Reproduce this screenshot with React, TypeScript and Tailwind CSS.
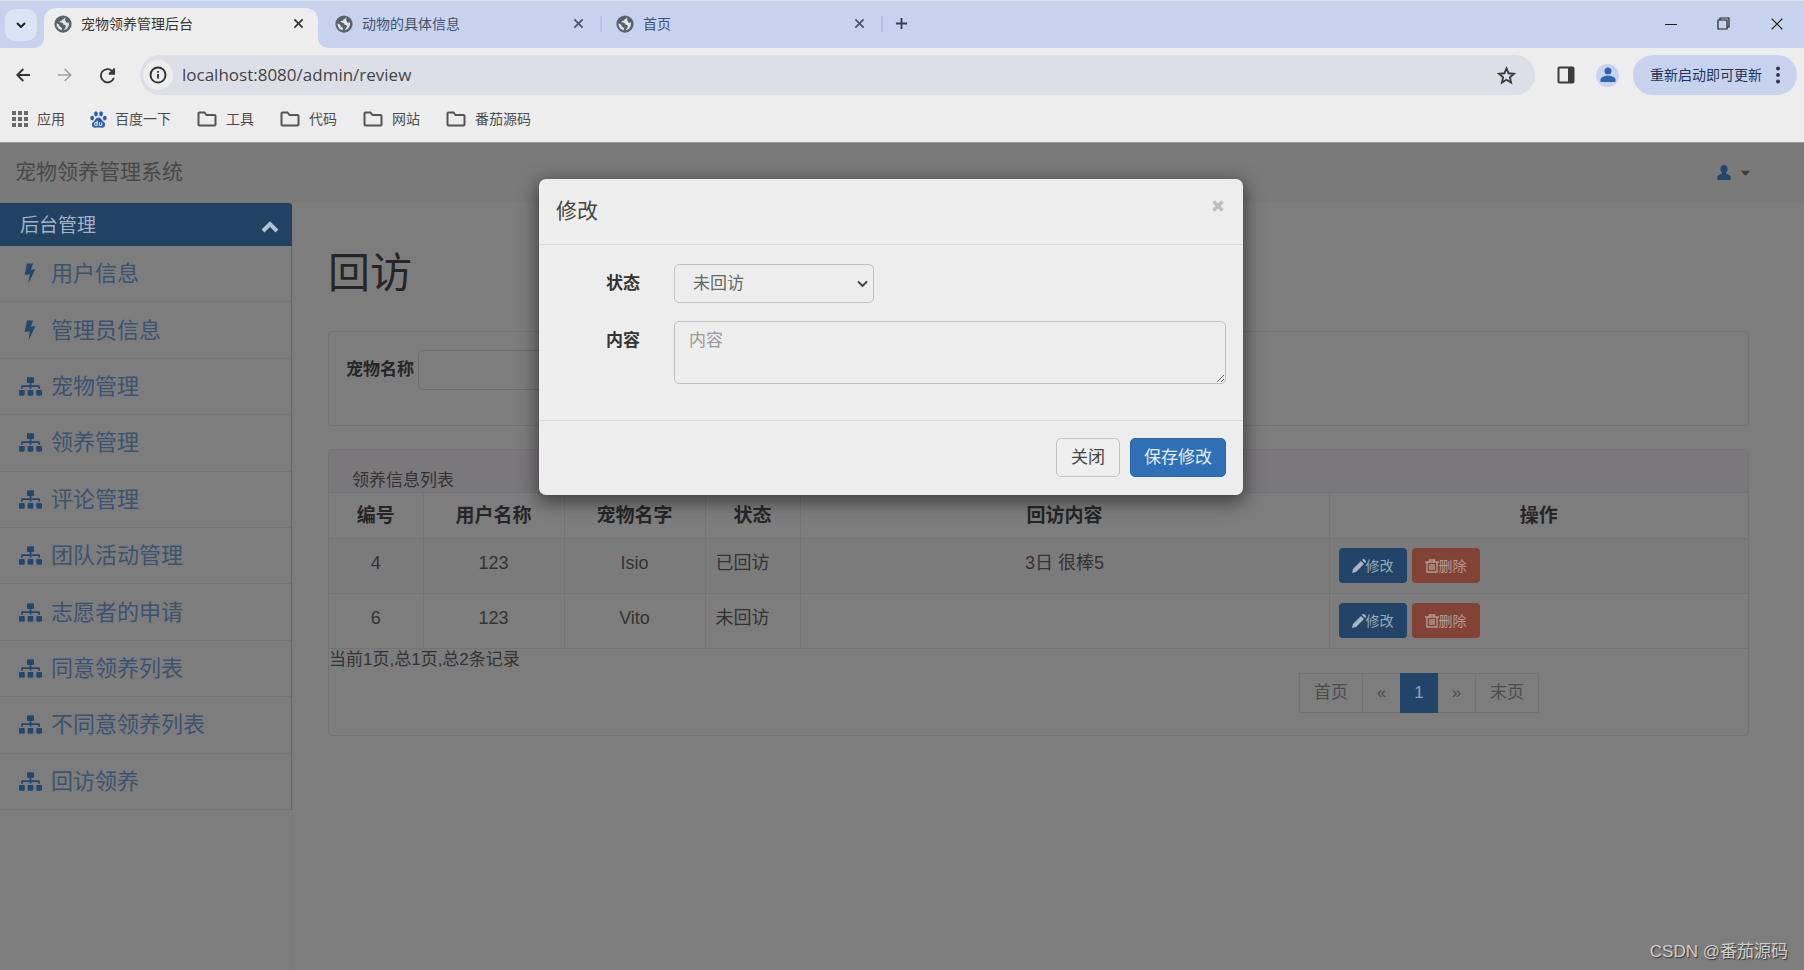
import React from "react";
import { FaSitemap, FaCaretDown } from "react-icons/fa";

const tabs = [
  { title: "宠物领养管理后台", active: true },
  { title: "动物的具体信息", active: false },
  { title: "首页", active: false },
];

const folders = ["工具", "代码", "网站", "番茄源码"];

const menu = [
  { label: "用户信息", icon: "bolt" },
  { label: "管理员信息", icon: "bolt" },
  { label: "宠物管理", icon: "tree" },
  { label: "领养管理", icon: "tree" },
  { label: "评论管理", icon: "tree" },
  { label: "团队活动管理", icon: "tree" },
  { label: "志愿者的申请", icon: "tree" },
  { label: "同意领养列表", icon: "tree" },
  { label: "不同意领养列表", icon: "tree" },
  { label: "回访领养", icon: "tree" },
];

const rows = [
  { id: "4", user: "123", pet: "Isio", status: "已回访", content: "3日 很棒5" },
  { id: "6", user: "123", pet: "Vito", status: "未回访", content: "" },
];

function Globe() {
  return (
    <svg viewBox="0 0 24 24" className="size-[18px] shrink-0" aria-hidden="true">
      <circle cx="12" cy="12" r="11.5" fill="#59616b" />
      <path
        d="M14.5 3.2c-.3 1.6-1.500 2-2.800 2.300-.8.2-.6 1.500-1.500 2-1 .5-2.600.2-2.700 1.600-.1 1.300 1.500 1 2.700 1.100 1.500.1 2 .8 2.100 1.900.1 1 .9 1.200 2 1.200 1.300.1 1.700.9 1.500 2-.2 1.200-1 1.500-1.400 2.600-.2.8-.9 1.700-1.900 2.600 4.300-.7 7.500-4.200 7.500-8.500 0-.8-.1-1.500-.3-2.200-.9.500-2 .7-2.900.200-1-.6-.7-1.800-1.500-2.400-.9-.7-.5-2.300.3-3.900zM3.500 11c-.5 4.600 2.500 8.400 6.800 9.400-.2-1.200.3-1.900.2-2.900-.1-1.200-1.600-1.100-2.500-1.900-.9-.8-.5-2-1.500-2.900-.8-.8-2.100-.9-3-1.700z"
        fill="#dfe3ec"
      />
    </svg>
  );
}

function Cross({ className }: { className: string }) {
  return (
    <svg viewBox="0 0 12 12" className={className} fill="none" stroke="currentColor" aria-hidden="true">
      <path d="M1.500 1.500l9 9M10.500 1.500l-9 9" />
    </svg>
  );
}

function Folder() {
  return (
    <svg viewBox="0 0 20 16" className="h-4 w-5" fill="none" stroke="#555" strokeWidth="2" aria-hidden="true">
      <path d="M1.500 2.500a1 1 0 0 1 1-1h5l2 2.500h8a1 1 0 0 1 1 1v8.500a1 1 0 0 1-1 1h-15a1 1 0 0 1-1-1z" />
    </svg>
  );
}

function Paw() {
  return (
    <svg viewBox="0 0 18 18" className="size-[17px]" aria-hidden="true">
      <g fill="#2b5fb3">
        <ellipse cx="2.300" cy="7.500" rx="2" ry="2.600" />
        <ellipse cx="6.300" cy="3" rx="2" ry="2.700" />
        <ellipse cx="11.700" cy="3" rx="2" ry="2.700" />
        <ellipse cx="15.700" cy="7.500" rx="2" ry="2.600" />
        <path d="M9 7c2.200 0 3 1.900 4.300 3.200 1.400 1.300 3 2.300 2.700 4.600-.3 2.100-1.700 3-3.400 2.900-1.200-.1-2.200-.3-3.600-.3s-2.400.2-3.600.3c-1.700.1-3.100-.8-3.400-2.900-.3-2.300 1.300-3.300 2.700-4.600C6 8.900 6.800 7 9 7z" />
      </g>
      <path
        d="M7.600 10.200v5.400M7.600 13a1.500 1.500 0 1 0 0 1.500M10 11.900v2.300q0 1.200 1.200 1.200h1.200v-3.500"
        fill="none"
        stroke="#e6ebf5"
        strokeWidth="1.100"
      />
    </svg>
  );
}

function Bolt() {
  return (
    <svg viewBox="0 0 12 22" className="h-[21px] w-3" fill="currentColor" aria-hidden="true">
      <path d="M2.800 0.500h6.400L7 7l4.700-.6L4.300 21.500 5.800 11.800.5 12.600z" />
    </svg>
  );
}

function UserGlyph() {
  return (
    <svg viewBox="0 0 14 15" className="h-[15px] w-[14px]" fill="currentColor" aria-hidden="true">
      <path d="M7 0c2.200 0 3.600 1.600 3.600 3.800 0 1.600-.6 2.900-1.600 3.800v1l3.600 1.700q1.100.5 1.100 1.700V15H.3v-3q0-1.200 1.100-1.700L5 8.600v-1C4 6.700 3.400 5.400 3.400 3.800 3.400 1.600 4.800 0 7 0z" />
    </svg>
  );
}

function TabStrip() {
  return (
    <div className="flex h-12 items-end border-t border-[#dbe8f2] bg-[#c7d3ee]">
      <div className="flex h-full w-11 items-center justify-center pr-[2px]">
        <button aria-label="搜索标签页" className="flex size-8 items-center justify-center rounded-[10px] bg-[#d9e4f4]">
          <svg viewBox="0 0 10 6" className="w-[10px]" fill="none" stroke="#222" strokeWidth="2" aria-hidden="true">
            <path d="M1 1l4 4 4-4" />
          </svg>
        </button>
      </div>
      {tabs.map((t) => (
        <div
          key={t.title}
          className={
            t.active
              ? "relative flex h-10 w-[274px] items-center rounded-t-[12px] bg-[#ededed] pb-[9px] pl-[10px] pr-[10px] text-[#333]"
              : "relative flex h-10 w-[281px] items-center pb-[9px] pl-[17px] pr-[11px] text-[#45506a]"
          }
        >
          {t.active && (
            <>
              <svg viewBox="0 0 10 10" className="absolute -left-[10px] bottom-0 size-[10px]" fill="#ededed" aria-hidden="true">
                <path d="M10 0v10H0A10 10 0 0 0 10 0z" />
              </svg>
              <svg viewBox="0 0 10 10" className="absolute -right-[10px] bottom-0 size-[10px]" fill="#ededed" aria-hidden="true">
                <path d="M0 0v10h10A10 10 0 0 1 0 0z" />
              </svg>
            </>
          )}
          <Globe />
          <span className="ml-[9px] flex-1 text-sm">{t.title}</span>
          <button aria-label="关闭标签页" className="p-1">
            <Cross className="size-[11px] stroke-[1.800]" />
          </button>
          {!t.active && <span className="absolute -right-[3px] top-2 h-4 w-0.5 bg-[#b3c2e2]" />}
        </div>
      ))}
      <button aria-label="新标签页" className="ml-[15px] flex h-full items-center pb-[2px] text-[#333f5c]">
        <svg viewBox="0 0 14 14" className="size-[13px]" stroke="currentColor" strokeWidth="2" aria-hidden="true">
          <path d="M7 1v12M1 7h12" />
        </svg>
      </button>
      <div className="ml-auto flex h-full items-center gap-[40px] pb-[2px] pr-[20px] text-[#222]">
        <button aria-label="最小化">
          <svg viewBox="0 0 12 12" className="size-3" stroke="currentColor" aria-hidden="true">
            <path d="M0 6.500h12" />
          </svg>
        </button>
        <button aria-label="还原">
          <svg viewBox="0 0 13 13" className="size-[13px]" fill="none" stroke="currentColor" strokeWidth="1.200" aria-hidden="true">
            <path d="M1 3h9v9H1zM3 3V1h9v9h-2" />
          </svg>
        </button>
        <button aria-label="关闭窗口">
          <Cross className="size-[14px]" />
        </button>
      </div>
    </div>
  );
}

function AddressBar() {
  return (
    <div className="flex h-[55px] items-center pb-px pl-[14px] pr-[7px]">
      <div className="flex items-center gap-[24px]">
        <button aria-label="后退" className="flex size-[18px] items-center justify-center text-[#333]">
          <svg viewBox="0 0 14 14" className="size-[14px]" fill="none" stroke="currentColor" strokeWidth="1.900" aria-hidden="true">
            <path d="M14 7H1.500M7.300 1L1.300 7l6 6" />
          </svg>
        </button>
        <button aria-label="前进" className="flex size-[18px] items-center justify-center text-[#a0a0a0]">
          <svg viewBox="0 0 14 14" className="size-[14px]" fill="none" stroke="currentColor" strokeWidth="1.700" aria-hidden="true">
            <path d="M0 7h12.500M6.700 1l6 6-6 6" />
          </svg>
        </button>
        <button aria-label="重新加载" className="flex size-[18px] items-center justify-center text-[#3a3a3a]">
          <svg viewBox="0 0 18 18" className="size-[17px]" fill="none" stroke="currentColor" strokeWidth="2" aria-hidden="true">
            <path d="M15.700 11.300A7 7 0 1 1 14 4.300l2 2" />
            <path d="M16 1v6h-6z" fill="currentColor" stroke="none" />
            <path d="M16 1.500v5.600h-5.600" />
          </svg>
        </button>
      </div>
      <div className="ml-[24px] flex h-10 flex-1 items-center rounded-full bg-[#dddfe7] pl-[3px] pr-[19px]">
        <span className="flex size-[30px] items-center justify-center rounded-full bg-[#ededed]">
          <svg viewBox="0 0 18 18" className="size-[18px]" fill="none" stroke="#333" strokeWidth="1.900" aria-hidden="true">
            <circle cx="9" cy="9" r="7.500" />
            <path d="M9 8v4.500M9 5v1.800" />
          </svg>
        </span>
        <input
          aria-label="地址"
          defaultValue="localhost:8080/admin/review"
          className="ml-[9px] min-w-0 flex-1 bg-transparent font-['Open_Sans','Noto_Sans_CJK_SC',sans-serif] text-[17px] text-[#444] outline-none"
        />
        <button aria-label="收藏">
          <svg viewBox="0 0 20 20" className="size-[19px]" fill="none" stroke="#3c3c3c" strokeWidth="2" aria-hidden="true">
            <path d="M10 2.500l2.200 5.200 5.600.5-4.200 3.700 1.200 5.500L10 14.500l-4.800 2.900 1.200-5.500L2.200 8.200l5.600-.5z" />
          </svg>
        </button>
      </div>
      <button aria-label="侧边栏" className="ml-[22px]">
        <svg viewBox="0 0 18 18" className="size-[18px]" aria-hidden="true">
          <rect x="1.500" y="1.500" width="15" height="15" rx="1" fill="none" stroke="#3c3c3c" strokeWidth="2" />
          <path d="M11 1.500h5.500v15H11z" fill="#3c3c3c" />
        </svg>
      </button>
      <button aria-label="个人资料" className="ml-[21px] flex size-[23px] items-center justify-center rounded-full bg-[#c9d4ee]">
        <svg viewBox="0 0 16 16" className="size-4" fill="#2d66b0" aria-hidden="true">
          <circle cx="8" cy="4" r="3.500" />
          <path d="M0.500 15v-2.500C.5 10 5 8.700 8 8.700s7.500 1.300 7.500 3.800V15z" />
        </svg>
      </button>
      <button className="ml-[14px] flex h-10 items-center rounded-full bg-[#c7d3ee] pl-[17px] pr-[17px] text-sm text-[#263355]">
        重新启动即可更新
        <svg viewBox="0 0 4 18" className="ml-[14px] h-[18px] w-1" fill="#263355" aria-hidden="true">
          <circle cx="2" cy="2.500" r="1.900" />
          <circle cx="2" cy="9" r="1.900" />
          <circle cx="2" cy="15.500" r="1.900" />
        </svg>
      </button>
    </div>
  );
}

function Bookmarks() {
  return (
    <div className="flex h-[39px] items-center pb-[7px] pl-[12px] text-sm text-[#4c4c4c]">
      <a href="#apps" className="flex items-center gap-[9px]">
        <svg viewBox="0 0 16 16" className="size-4" fill="#6a6a6a" aria-hidden="true">
          {[0, 6, 12].map((y) => [0, 6, 12].map((x) => <rect key={`${x}-${y}`} x={x} y={y} width="4" height="4" />))}
        </svg>
        应用
      </a>
      <a href="#baidu" className="ml-[25px] flex items-center gap-[8px]">
        <Paw />
        百度一下
      </a>
      {folders.map((f) => (
        <a key={f} href="#folder" className="ml-[26px] flex items-center gap-[9px]">
          <Folder />
          {f}
        </a>
      ))}
    </div>
  );
}

function Sidebar() {
  return (
    <aside className="flex w-[292px] shrink-0 flex-col">
      <button className="flex h-[43px] items-center justify-between rounded-tr-[3px] bg-[#214263] pl-[20px] pr-[13px] text-[19px] text-[#a3b3c3]">
        <span className="pt-[3px]">后台管理</span>
        <svg viewBox="0 0 18 12" className="mt-[4px] w-[18px]" fill="none" stroke="#b4c2ce" strokeWidth="4" aria-hidden="true">
          <path d="M2 10l7-7 7 7" />
        </svg>
      </button>
      <ul className="grid min-h-[564px] auto-rows-fr border-r border-[#686868]">
        {menu.map((m) => (
          <li key={m.label} className="flex border-b border-[#747474]">
            <a href="#menu" className="flex flex-1 items-center pl-[18px] text-[22px] text-[#3b536f]">
              <span className="mr-[9px] flex w-[24px] justify-center text-[#23466d]">
                {m.icon === "bolt" ? <Bolt /> : <FaSitemap className="size-[23px]" />}
              </span>
              {m.label}
            </a>
          </li>
        ))}
      </ul>
    </aside>
  );
}

function ReviewTable() {
  return (
    <table className="w-full table-fixed border-collapse text-[18px] leading-[26px] text-[#333]">
      <colgroup>
        <col className="w-[94px]" />
        <col className="w-[141px]" />
        <col className="w-[141px]" />
        <col className="w-[95px]" />
        <col className="w-[529px]" />
        <col />
      </colgroup>
      <thead>
        <tr className="h-[46px] border-y border-[#737375] text-[19px] text-[#262628]">
          {["编号", "用户名称", "宠物名字", "状态", "回访内容", "操作"].map((h) => (
            <th key={h} className="border-r border-[#747476] p-0 font-bold last:border-r-0">
              {h}
            </th>
          ))}
        </tr>
      </thead>
      <tbody>
        {rows.map((r) => (
          <tr key={r.id} className="h-[55px] border-b border-[#737375] text-center align-top odd:bg-[#7b7b7b]">
            <td className="border-r border-[#747476] pt-[11px]">{r.id}</td>
            <td className="border-r border-[#747476] pt-[11px]">{r.user}</td>
            <td className="border-r border-[#747476] pt-[11px]">{r.pet}</td>
            <td className="border-r border-[#747476] pl-[10px] pt-[11px] text-left">{r.status}</td>
            <td className="border-r border-[#747476] pt-[11px]">{r.content}</td>
            <td className="pl-[9px] pt-[9px]">
              <div className="flex gap-[5px] text-[14px]">
                <button className="flex h-[35px] w-[68px] items-center justify-center rounded bg-[#214468] text-[#9aa9b8]">
                  <svg viewBox="0 0 14 14" className="size-[14px]" fill="#a9b7c4" aria-hidden="true">
                    <path d="M0 14l1-4 8-8 3 3-8 8zM10 1l1-1q.5-.3 1 0l2 2q.3.500 0 1l-1 1z" />
                  </svg>
                  修改
                </button>
                <button className="flex h-[35px] w-[68px] items-center justify-center rounded bg-[#824336] text-[#b39a94]">
                  <svg viewBox="0 0 14 14" className="size-[14px]" fill="none" stroke="#b39a94" strokeWidth="1.400" aria-hidden="true">
                    <path d="M0 3h14M4.500 3V1h5v2M2 3v10h10V3M5 5v6M7 5v6M9 5v6" />
                  </svg>
                  删除
                </button>
              </div>
            </td>
          </tr>
        ))}
      </tbody>
    </table>
  );
}

function Pagination() {
  return (
    <nav aria-label="分页" className="mt-[2px] flex justify-end pr-[209px]">
      <ul className="flex h-[40px] border border-[#727274] text-[17px] text-[#4c4c4e]">
        <li className="flex border-r border-[#727274]">
          <a href="#first" className="flex w-[62px] items-center justify-center">首页</a>
        </li>
        <li className="flex">
          <a href="#prev" className="flex w-[37px] items-center justify-center">«</a>
        </li>
        <li className="-my-px flex">
          <a href="#1" aria-current="page" className="flex w-[38px] items-center justify-center bg-[#214468] text-[#8fa3b8]">1</a>
        </li>
        <li className="flex border-r border-[#727274]">
          <a href="#next" className="flex w-[37px] items-center justify-center">»</a>
        </li>
        <li className="flex">
          <a href="#last" className="flex w-[62px] items-center justify-center">末页</a>
        </li>
      </ul>
    </nav>
  );
}

function EditDialog() {
  return (
    <div
      role="dialog"
      aria-modal="true"
      aria-labelledby="dialog-title"
      className="w-[704px] max-w-full rounded-[7px] bg-[#ededed] shadow-[0_5px_18px_2px_rgba(0,0,0,0.5)]"
    >
      <div className="flex items-start justify-between border-b border-[#dadadc] px-[17px] pb-[18px] pt-[17px]">
        <h2 id="dialog-title" className="text-[21px] leading-[30px] text-[#444]">修改</h2>
        <button aria-label="关闭对话框" className="mt-[2px] p-[2px] text-[#bdbdbd]">
          <Cross className="size-[12px] stroke-[3.500]" />
        </button>
      </div>
      <form className="flex flex-col gap-[18px] px-[17px] pb-[36px] pt-[19px] text-[17px] text-[#333]">
        <div className="flex items-start">
          <label htmlFor="status" className="w-[84px] pt-[7px] text-right font-bold leading-[26px]">状态</label>
          <div className="relative ml-[34px]">
            <select
              id="status"
              className="h-[39px] w-[200px] appearance-none rounded-[5px] border border-[#c2c2c6] bg-[#ededed] pl-[18px] text-[17px] text-[#666]"
            >
              <option>未回访</option>
              <option>已回访</option>
            </select>
            <svg
              viewBox="0 0 12 8"
              className="pointer-events-none absolute right-[6px] top-[16px] w-[11px]"
              fill="none"
              stroke="#444"
              strokeWidth="2.200"
              aria-hidden="true"
            >
              <path d="M1 1.500l5 5 5-5" />
            </svg>
          </div>
        </div>
        <div className="flex items-start">
          <label htmlFor="content" className="w-[84px] pt-[7px] text-right font-bold leading-[26px]">内容</label>
          <textarea
            id="content"
            placeholder="内容"
            className="ml-[34px] h-[63px] flex-1 rounded-[5px] border border-[#bfbfc6] bg-[#ededed] px-[14px] py-[6px] text-[17px] placeholder:text-[#999]"
          />
        </div>
      </form>
      <div className="flex justify-end gap-[10px] border-t border-[#dadadc] px-[17px] pb-[18px] pt-[17px] text-[17px]">
        <button className="h-[39px] rounded-[5px] border border-[#c2c2c4] bg-[#efefef] px-[14px] text-[#444]">关闭</button>
        <button className="h-[39px] rounded-[5px] border border-[#2b65a5] bg-[#2f6fb5] px-[13px] text-[#e6edf5]">保存修改</button>
      </div>
    </div>
  );
}

export default function App() {
  return (
    <div className="flex min-h-screen flex-col bg-[#7d7d7d] font-['Liberation_Sans','Noto_Sans_CJK_SC',sans-serif]">
      <header className="border-b border-[#9b9b9b] bg-[#ededed]">
        <TabStrip />
        <AddressBar />
        <Bookmarks />
      </header>

      <div className="relative flex flex-1 flex-col">
        <div className="flex h-[60px] items-center justify-between bg-[#7a7a7a] pb-[2px] pl-[15px] pr-[51px]">
          <span className="text-[21px] text-[#484848]">宠物领养管理系统</span>
          <button aria-label="用户菜单" className="flex items-center gap-[7px] text-[#23466d]">
            <UserGlyph />
            <FaCaretDown className="size-[15px] text-[#3e3e3e]" />
          </button>
        </div>

        <div className="flex flex-1">
          <Sidebar />
          <main className="flex-1 border-l border-[#797979] pb-10 pl-[35px] pr-[55px]">
            <h1 className="mt-[41px] text-[42px] leading-[60px] text-[#262626]">回访</h1>
            <section className="mt-[27px] h-[95px] rounded-[4px] border border-[#737373] px-[17px] pt-[18px]">
              <div className="flex items-center gap-[4px]">
                <label htmlFor="pet" className="text-[17px] font-bold text-[#262626]">宠物名称</label>
                <input id="pet" className="h-[40px] w-[200px] rounded-[5px] border border-[#6c6c6c] bg-transparent px-3" />
              </div>
            </section>
            <section className="mt-[23px] h-[287px] rounded-[4px] border border-[#737375]">
              <h2 className="h-[42px] bg-[#7b787b] pl-[23px] pt-[19px] text-[17px] leading-[24px] text-[#333]">领养信息列表</h2>
              <ReviewTable />
              <p className="text-[17px] leading-[22px] text-[#333]">当前1页,总1页,总2条记录</p>
              <Pagination />
            </section>
          </main>
        </div>

        <div className="absolute inset-0 flex items-start justify-center pr-[22px] pt-[36px]">
          <EditDialog />
        </div>
        <p className="absolute bottom-[6px] right-[16px] text-[17px] text-[#cfcfcf] [text-shadow:1px_1px_1px_#333]">CSDN @番茄源码</p>
      </div>
    </div>
  );
}
